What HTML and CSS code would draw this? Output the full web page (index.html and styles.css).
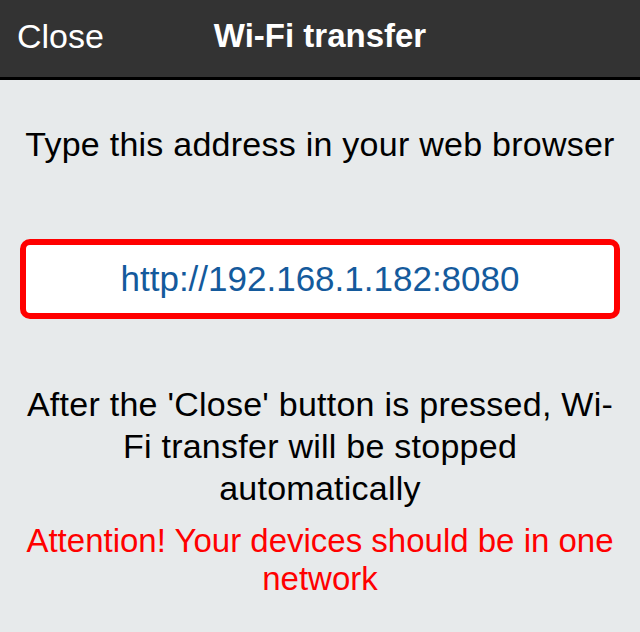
FILE: index.html
```html
<!DOCTYPE html>
<html lang="en">
<head>
    <meta charset="UTF-8">
    <meta name="viewport" content="width=device-width, initial-scale=1.0">
    <title>Wi-Fi transfer</title>
    <link rel="stylesheet" href="styles.css">
</head>
<body>
    <div class="navbar">
        <span class="nav-close">Close</span>
        <span class="nav-title">Wi-Fi transfer</span>
        <span></span>
    </div>
    <div class="content">
        <p class="hint">Type this address in your web browser</p>
        <div class="address-box">http://192.168.1.182:8080</div>
        <p class="note">After the 'Close' button is pressed, Wi-<br>Fi transfer will be stopped<br>automatically</p>
        <p class="warning">Attention! Your devices should be in one<br>network</p>
    </div>
</body>
</html>
```

FILE: styles.css
```css
body {
    font-family: 'Liberation Sans', Arial, sans-serif;
    background: #e7eaeb;
    color: #000;
    margin: 0;
    height: 632px;
    overflow: hidden;
}
.navbar {
    height: 60px;
    padding: 17px 17px 0;
    background: #333333;
    border-bottom: 3px solid #000;
    color: #fff;
    display: grid;
    grid-template-columns: 1fr auto 1fr;
    line-height: 38px;
}
.nav-close {
    font-size: 34px;
    justify-self: start;
}
.nav-title {
    font-size: 33px;
    font-weight: bold;
}
.content {
    padding: 0 20px;
    text-align: center;
}
.hint {
    font-size: 34px;
    letter-spacing: 0.25px;
    line-height: 40px;
    margin: 0;
    padding-top: 44px;
}
.address-box {
    margin-top: 75px;
    height: 68px;
    border: 6px solid #ff0000;
    border-radius: 10px;
    background: #fff;
    color: #145a9c;
    font-size: 35px;
    display: flex;
    align-items: center;
    justify-content: center;
}
.note {
    font-size: 34px;
    letter-spacing: 0.25px;
    line-height: 42px;
    margin: 64px 0 0;
}
.warning {
    font-size: 33px;
    line-height: 38px;
    color: #ff0000;
    margin: 13px 0 0;
}
```
